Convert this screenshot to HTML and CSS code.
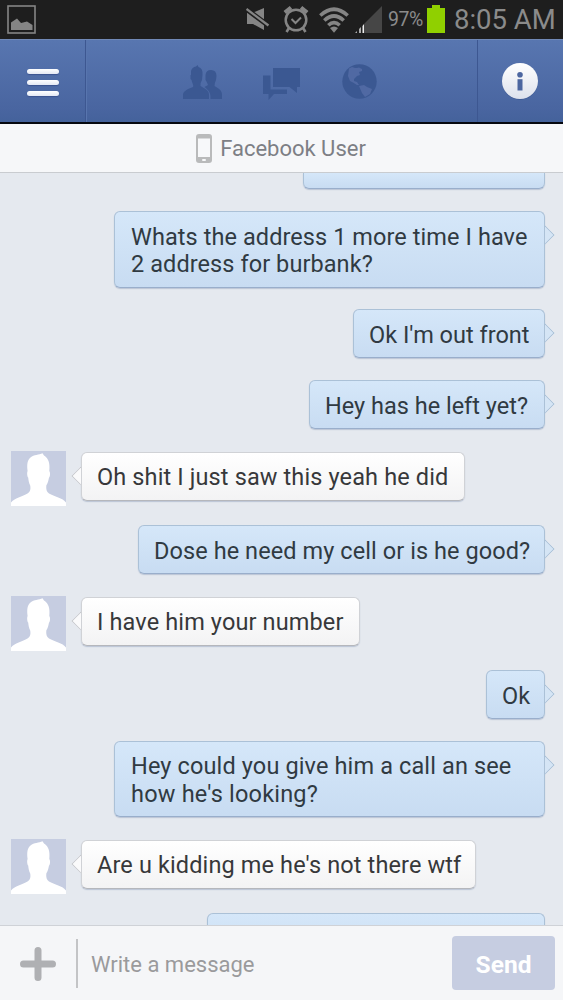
FILE: index.html
```html
<!DOCTYPE html>
<html lang="en">
<head>
<meta charset="utf-8">
<title>Messages</title>
<link rel="stylesheet" href="styles.css">
</head>
<body>
<svg class="defs" width="0" height="0" aria-hidden="true">
  <symbol id="person" viewBox="0 0 55 55">
    <path d="M0 55V51.500C3 47.500 12 45 16.500 42.500C19.500 40.500 19.800 38 19.200 34.500C17.800 32 17.500 29 17.200 26.500C16.200 26 15.800 21.500 16.600 20C15.800 13 16.500 9 19.500 6.500C23 3.500 28 4 31.500 2.200L33 4.500C38 7.500 39 13 38.300 20C39.500 21.500 39.200 26 38 26.500C37.500 29 37 32 35.300 34.500C35 38 35.500 41 38 42.500C43 45.500 52 47 55 51.500V55Z" fill="#fff"/>
  </symbol>
</svg>
<div class="screen">
  <div class="status">
    <svg class="picture" width="30" height="30" viewBox="0 0 30 30"><rect x="1" y="1" width="27" height="27" fill="none" stroke="#858585" stroke-width="1.600"/><path d="M4 25V17.500L10 13.500 14 18 20 16.500 25.500 20V25Z" fill="#858585"/></svg>
    <svg class="mute" width="24" height="24" viewBox="0 0 24 24" fill="#858585"><path d="M1 6H6L18 1V23L7 17H1Z"/><path d="M0 2L23 19" stroke="#1e1e1e" stroke-width="5"/><path d="M.5 2L22.500 18.500" stroke="#858585" stroke-width="2.300"/></svg>
    <svg class="alarm" width="26" height="28" viewBox="0 0 26 28" fill="none" stroke="#858585"><circle cx="13" cy="15" r="10.300" stroke-width="2.500"/><path d="M8.500 14L12.500 18 18 12.500" stroke-width="2"/><path d="M1.800 7.500L8 2.500M24.200 7.500L18 2.500" stroke-width="4"/><path d="M6 23L3.500 27M20 23L22.500 27" stroke-width="2.600"/></svg>
    <svg class="wifi" width="30" height="26" viewBox="0 0 30 26" fill="none" stroke="#858585" stroke-width="3.600"><path d="M1.300 8.500Q15-4 28.700 8.500M5.300 13.500Q15 4.500 24.700 13.500M9.300 18.300Q15 13 20.700 18.300"/><path d="M11 21Q15 18 19 21L15 25.800Z" fill="#858585" stroke="none"/></svg>
    <svg class="signal" width="27" height="27" viewBox="0 0 27 27"><path d="M27 0V27H9V18Z" fill="#464646"/><path d="M0 27L2 25V27ZM4 27V23L6 21V27Z" fill="#aaa"/><path d="M7.500 27V20L9 18V27Z" fill="#eee"/></svg>
    <span class="percent">97%</span>
    <svg class="battery" width="18" height="28" viewBox="0 0 18 28"><path d="M0 3H5V0H13V3H18V28H0Z" fill="#90d000"/></svg>
    <span class="clock">8:05 AM</span>
  </div>
  <header class="nav">
    <div class="nav-menu"><i></i><i></i><i></i></div>
    <div class="nav-tabs">
      <svg class="friends" width="40" height="35" viewBox="0 0 40 35" fill="#3b5892"><path d="M0 34V30C0 26 5 24 10 22C11 20 9 18 8.500 15L7.500 14V10H8V6Q9 2 13 1.500L14.500 0 15.500 2Q20 3 19.500 10L19 15Q17 18 17.500 21C22 24 26 25 26 30V34Z"/><path d="M27.500 34C28 27 25 25 21.500 22L25 20Q24 17 22.500 15V10Q23 5 28 5Q33.500 5 33.500 11L33 15Q31.500 18 31.500 21C36 24 39 25 39 30V34Z"/></svg>
      <svg class="chat" width="38" height="32" viewBox="0 0 38 32" fill="#3b5892"><path d="M0 7.500H7.500V21.500H24V26H11L5.500 32V26H0Z"/><path d="M10 0H37V19H34V25L26.500 19H10Z"/></svg>
      <svg class="globe" width="35" height="35" viewBox="0 0 35 35"><circle cx="17.500" cy="17.500" r="17.200" fill="#3b5892"/><path d="M7 4.500L10 3 13 4 15 4 17 3.500 20 5 20 7 17 8 18 11 15 12 12 15 12 17 15 18 17 21 15 21 11 18.500 8 17 6 12ZM17 22L22 21 25 23 30 25 28 30 23 33 20 29Z" fill="#5069a3"/></svg>
    </div>
    <div class="nav-info"><svg width="38" height="38" viewBox="0 0 38 38"><defs><linearGradient id="disc" x2="0" y2="1"><stop stop-color="#fff"/><stop offset="1" stop-color="#dde1ec"/></linearGradient></defs><circle cx="19" cy="19.700" r="18" fill="#334f87" opacity=".6"/><circle cx="19" cy="19" r="18" fill="url(#disc)"/><circle cx="19" cy="12.700" r="2.800" fill="#4c66a0"/><path d="M16.500 17.200H21.500V28.500H16.500Z" fill="#4c66a0"/></svg></div>
  </header>
  <div class="title">
    <svg width="16" height="29" viewBox="0 0 16 29"><rect width="16" height="29" rx="3" fill="#b9babb"/><path d="M2 4.500H14V23H2Z" fill="#f7f8fa"/><rect x="6" y="25" width="4" height="2" rx="1" fill="#f7f8fa"/></svg>
    <span>Facebook User</span>
  </div>
  <main class="thread">
    <div class="row out"><div class="bubble cut-top"></div></div>
    <div class="row out"><div class="bubble w431 tip"><span class="ls-s">Whats the address 1 more time I have</span><br><span class="ls-s">2 address for burbank?</span></div></div>
    <div class="row out"><div class="bubble w192 tip"><span>Ok I'm out front</span></div></div>
    <div class="row out"><div class="bubble w236 tip"><span>Hey has he left yet?</span></div></div>
    <div class="row in"><svg class="avatar"><use href="#person"/></svg><div class="bubble w384 tip"><span class="ls-m">Oh shit I just saw this yeah he did</span></div></div>
    <div class="row out"><div class="bubble w407 tip"><span class="ls-s">Dose he need my cell or is he good?</span></div></div>
    <div class="row in"><svg class="avatar"><use href="#person"/></svg><div class="bubble w279 tip"><span class="ls-m">I have him your number</span></div></div>
    <div class="row out"><div class="bubble w59 tip"><span>Ok</span></div></div>
    <div class="row out"><div class="bubble w431 tip"><span class="ls-m">Hey could you give him a call an see</span><br><span class="ls-l">how he's looking?</span></div></div>
    <div class="row in"><svg class="avatar"><use href="#person"/></svg><div class="bubble w395 tip"><span class="ls-m">Are u kidding me he's not there wtf</span></div></div>
    <div class="row out"><div class="bubble w338"></div></div>
  </main>
  <footer class="composer">
    <svg class="plus" width="36" height="34" viewBox="0 0 36 34"><path d="M18 3.500V30.500M3.500 17H32.500" stroke="#afb0b3" stroke-width="7" stroke-linecap="round"/></svg>
    <div class="field">Write a message</div>
    <div class="send">Send</div>
  </footer>
</div>
</body>
</html>
```

FILE: styles.css
```css
* { box-sizing: border-box; }
body { margin: 0; font-family: Roboto, sans-serif; }
.defs { display: block; }
svg { display: block; flex: none; }
.screen { width: 563px; height: 1000px; display: flex; flex-direction: column; overflow: hidden; background: #e5e9ef; }

.status { flex: none; height: 39px; background: #1e1e1e; color: #8b8b8b; display: flex; align-items: flex-start; white-space: nowrap; }
.picture { margin: 5px 0 0 7px; }
.mute { margin: 7px 0 0 209px; }
.alarm { margin: 5px 0 0 13px; }
.wifi { margin: 7px 0 0 10px; }
.signal { margin: 6px 0 0 6px; }
.percent { margin: 8px 0 0 6px; width: 36px; font-size: 19.500px; line-height: 24px; letter-spacing: -.4px; }
.battery { margin: 5px 0 0 3px; }
.clock { margin: 4px 0 0 9px; font-size: 27.500px; line-height: 31px; }

.nav { flex: none; height: 85px; display: flex; background: linear-gradient(#5876b0, #4965a0 85%, #44629b); border-top: 1px solid #7189b7; border-bottom: 2px solid #05080f; }
.nav-menu { width: 86px; border-right: 1px solid #3d5791; padding: 29px 0 0 27px; }
.nav-menu i { display: block; width: 32px; height: 5px; margin-bottom: 6px; border-radius: 3px; background: linear-gradient(#fff, #e3e8f4); box-shadow: 0 1px 1px #3b5490; }
.nav-tabs { flex: 1; display: flex; border-left: 1px solid #5875ae; }
.friends { margin: 25px 0 0 96px; }
.chat { margin: 28px 0 0 40px; }
.globe { margin: 24px 0 0 41px; }
.nav-info { width: 86px; border-left: 1px solid #3d5791; padding: 22px 0 0 23px; }

.title { flex: none; height: 49px; background: #f6f7f9; border-bottom: 1px solid #c9ccd0; display: flex; justify-content: center; align-items: center; gap: 8px; padding-right: 1px; font-size: 22px; color: #7d7f85; white-space: nowrap; }

.thread { flex: 1; min-height: 0; overflow: hidden; }
.row { display: flex; }
.out { justify-content: flex-end; padding-right: 18px; margin-bottom: 21.400px; }
.out:first-child { margin-bottom: 22px; }
.in { padding-left: 11px; margin-bottom: 19px; }
.avatar { width: 55px; height: 55px; background: #c6cde1; margin-right: 15px; }
.bubble { position: relative; min-height: 49.600px; padding: 12px 0 7px 15px; border: 1px solid #abc1d7; border-bottom-color: #99aecb; box-shadow: 0 1px 1px rgba(110, 130, 165, .35); border-radius: 6px; background: linear-gradient(#d5e7f9, #c8dcf2); font-size: 23.500px; line-height: 27.500px; color: #303a42; white-space: nowrap; }
.in .bubble { min-height: 0; height: 49px; margin-top: 1px; padding-top: 11px; background: linear-gradient(#fff, #f3f3f4); border-color: #d0d2d6; border-bottom-color: #b5b7bc; color: #37383a; }
.out .cut-top { width: 242px; min-height: 0; height: 16px; border-top: 0; border-radius: 0 0 6px 6px; padding: 0; }
.ls-s { letter-spacing: .08px; }
.ls-m { letter-spacing: .13px; }
.ls-l { letter-spacing: .2px; }
.bubble.w431 { width: 431px; padding: 11.500px 0 8px 16px; }
.w192 { width: 192px; }
.w236 { width: 236px; }
.w384 { width: 384px; }
.w407 { width: 407px; }
.w279 { width: 279px; }
.w59 { width: 59px; }
.w395 { width: 395px; }
.w338 { width: 338px; }
.tip::after { content: ""; position: absolute; top: 16px; width: 13px; height: 13px; transform: rotate(45deg); }
.out .tip::after { right: -8px; background: #d5e5f5; border: 1px solid #abc1d7; border-left: 0; border-bottom: 0; clip-path: polygon(0 0, 100% 0, 100% 100%); }
.in .tip::after { left: -8px; background: #fafafb; border: 1px solid #c6c8cd; border-right: 0; border-top: 0; clip-path: polygon(0 0, 0 100%, 100% 100%); }

.composer { flex: none; height: 75px; display: flex; background: #f5f6f8; border-top: 1px solid #cfd2d7; }
.plus { margin: 21px 0 0 20px; }
.field { width: 375px; height: 49px; margin: 13px 0 0 20px; padding-left: 13px; border-left: 2px solid #c3c4c6; font-size: 22px; line-height: 51px; color: #9a9a9c; }
.send { width: 103px; height: 54px; margin-top: 10px; margin-left: 1px; border-radius: 4px; background: #c6cde1; color: #fff; font-size: 24.500px; font-weight: 700; line-height: 57px; text-align: center; }
```
